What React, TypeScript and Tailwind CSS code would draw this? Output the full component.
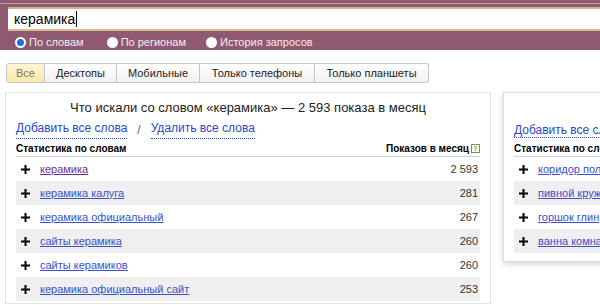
import React from "react";

const Plus = () => (
  <svg width="9" height="9" viewBox="0 0 9 9" className="shrink-0">
    <rect x="3.5" y="0" width="2" height="9" fill="#000" />
    <rect x="0" y="3.5" width="9" height="2" fill="#000" />
  </svg>
);

const leftRows = [
  { w: "керамика", n: "2 593", visited: true },
  { w: "керамика калуга", n: "281" },
  { w: "керамика официальный", n: "267" },
  { w: "сайты керамика", n: "260" },
  { w: "сайты керамиков", n: "260" },
  { w: "керамика официальный сайт", n: "253" },
];

const rightRows = ["коридор пол", "пивной круж", "горшок глин", "ванна комна"];

const tabs = [
  { t: "Все", w: "w-[39px]", active: true },
  { t: "Десктопы", w: "w-[72px]" },
  { t: "Мобильные", w: "w-[83px]" },
  { t: "Только телефоны", w: "w-[115px]" },
  { t: "Только планшеты", w: "w-[114px]" },
];

export default function App() {
  return (
    <div className="w-[600px] h-[305px] overflow-hidden bg-white font-['Liberation_Sans',Arial,sans-serif] text-[#333]">
      {/* header band */}
      <div className="h-[50px] bg-[#8f5a6f] pt-[3px]">
        <div className="h-px bg-[#c29aab]" />
        <div className="ml-[8px] mt-[3px] h-[24px] bg-white border-t-2 border-b-2 border-t-[#cdb594] border-b-[#d6bb8c] flex items-center pl-[6px]">
          <span className="text-[14px] leading-[18px] text-black">керамика</span>
          <span className="w-px h-[16px] bg-black ml-px" />
        </div>
        <div className="flex items-center ml-[15px] mt-[4px] text-[11px] leading-[14px] text-[#f4ecef]">
          <span className="w-[11px] h-[11px] rounded-full bg-[#1e6fe0] border-2 border-white box-border shrink-0" />
          <span className="ml-[3px]">По словам</span>
          <span className="w-[11px] h-[11px] rounded-full bg-white ml-[23px] shrink-0" />
          <span className="ml-[3px]">По регионам</span>
          <span className="w-[11px] h-[11px] rounded-full bg-white ml-[20px] shrink-0" />
          <span className="ml-[3px]">История запросов</span>
        </div>
      </div>

      {/* tabs */}
      <div className="flex ml-[6px] mt-[13px] h-[20px]">
        {tabs.map((tab, i) => (
          <div
            key={tab.t}
            className={`${tab.w} h-[20px] flex items-center justify-center text-[11px] border-y border-r border-[#c6c6c6] ${
              i === 0 ? "border-l rounded-l-[3px] bg-gradient-to-b from-[#fff6d3] to-[#fbe7a8] text-[#777]" : "bg-gradient-to-b from-white to-[#f1f1f1] text-[#222]"
            } ${i === tabs.length - 1 ? "rounded-r-[3px]" : ""}`}
          >
            {tab.t}
          </div>
        ))}
      </div>

      {/* cards */}
      <div className="flex items-start gap-[12px] ml-[5px] mt-[9px]">
        <div className="w-[486px] h-[212px] shrink-0 border border-[#e2e2e2] px-[10px]">
          <div className="text-center text-[13px] leading-[18px] text-[#222] pt-[6px]">
            Что искали со словом «керамика» — 2 593 показа в месяц
          </div>
          <div className="mt-[4px] text-[12px] leading-[18px] flex">
            <span className="text-[#2b47c6] border-b border-dotted border-[#2b47c6] leading-[15px]">Добавить все слова</span>
            <span className="mx-[10px] text-[#555]">/</span>
            <span className="text-[#2b47c6] border-b border-dotted border-[#2b47c6] leading-[15px]">Удалить все слова</span>
          </div>
          <div className="mt-[3px] flex items-center justify-between text-[10px] font-bold leading-[13px] text-black border-b border-[#cfcfd6] pb-[1px] w-[464px]">
            <span>Статистика по словам</span>
            <span className="flex items-center">
              Показов в месяц
              <span className="ml-[2px] w-[9px] h-[9px] border border-[#6e9f3c] text-[#6e9f3c] text-[7px] leading-[7px] flex items-center justify-center font-bold">?</span>
            </span>
          </div>
          <div className="w-[464px]">
            {leftRows.map((r, i) => (
              <div
                key={r.w}
                className={`h-[24px] flex items-center pl-[5px] pr-[2px] ${i % 2 === 1 ? "bg-[#efefef]" : ""}`}
              >
                <Plus />
                <span className={`ml-[10px] text-[11px] underline ${r.visited ? "text-[#6b2f9a]" : "text-[#3a4fcb]"}`}>{r.w}</span>
                <span className="ml-auto text-[11px] text-[#333]">{r.n}</span>
              </div>
            ))}
          </div>
        </div>

        <div className="w-[120px] h-[170px] shrink-0 border border-[#dcdcdc] shadow-[0_2px_6px_rgba(0,0,0,0.18)] pl-[10px] overflow-hidden">
          <div className="h-[24px]" />
          <div className="mt-[4px] text-[12px] leading-[18px] whitespace-nowrap">
            <span className="text-[#2b47c6] border-b border-dotted border-[#2b47c6] leading-[15px]">Добавить все слова</span>
          </div>
          <div className="mt-[3px] text-[10px] font-bold leading-[13px] text-black border-b border-[#cfcfd6] pb-[1px] whitespace-nowrap">
            Статистика по словам
          </div>
          {rightRows.map((w, i) => (
            <div
              key={w}
              className={`h-[24px] flex items-center pl-[5px] whitespace-nowrap ${i % 2 === 1 ? "bg-[#efefef]" : ""}`}
            >
              <Plus />
              <span className="ml-[10px] text-[11px] underline text-[#3a4fcb]">{w}</span>
            </div>
          ))}
        </div>
      </div>
    </div>
  );
}
